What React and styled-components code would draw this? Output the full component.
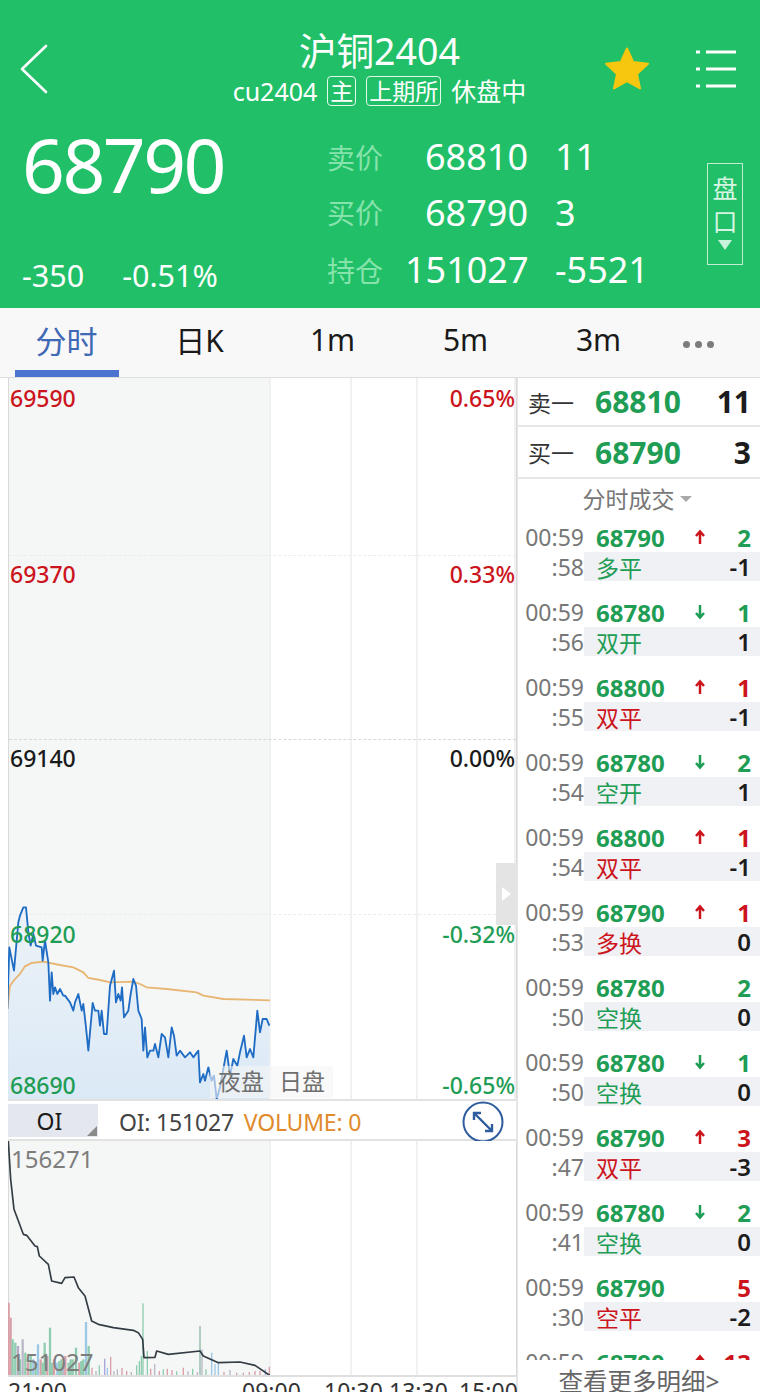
import React from "react";
import styled, { createGlobalStyle } from "styled-components";

const GREEN = "#21bf67";
const UP = "#cc141c";
const DOWN = "#1f9d55";

const GlobalStyle = createGlobalStyle`
  html, body {
    margin: 0;
    padding: 0;
    background: #fff;
    font-family: "Noto Sans", "Noto Sans CJK SC", sans-serif;
  }
  * { box-sizing: border-box; }
`;

const Page = styled.div`
  width: 760px;
  height: 1392px;
  overflow: hidden;
  display: flex;
  flex-direction: column;
`;

// top green block
const Header = styled.header`
  height: 308px;
  flex: none;
  background: ${GREEN};
  color: #fff;
  padding: 29px 23px 0 20px;
`;

const NavRow = styled.div`
  display: grid;
  grid-template-columns: 1fr auto 1fr;
  align-items: center;
`;

const NavRight = styled.div`
  display: flex;
  justify-content: flex-end;
  align-items: center;
  gap: 45px;
`;

const TitleBlock = styled.div`
  text-align: center;
  margin-left: 2px;
`;

const Title = styled.div`
  font-size: 37.5px;
  line-height: 44px;
`;

const SubTitle = styled.div`
  font-size: 25px;
  line-height: 34px;
  display: flex;
  justify-content: center;
  align-items: center;
  gap: 10px;
  margin-top: 1px;
  white-space: nowrap;
`;

const Tag = styled.span`
  border: 1.5px solid #e4f8ec;
  border-radius: 4px;
  font-size: 23px;
  line-height: 28px;
  padding: 0 2px;
`;

const QuoteRow = styled.div`
  display: flex;
  margin-top: 14px;
`;

const PriceCol = styled.div`
  width: 305px;
  flex: none;
  padding-left: 2px;
`;

const BigPrice = styled.div`
  font-size: 75px;
  line-height: 90px;
  letter-spacing: -2.5px;
  margin-top: -3px;
`;

const ChangeRow = styled.div`
  display: flex;
  gap: 38px;
  font-size: 30.5px;
  line-height: 40px;
  margin-top: 46px;
`;

const QuoteGrid = styled.div`
  display: grid;
  grid-template-columns: 78px 123px auto;
  grid-template-rows: 55px 56px 59px;
  align-items: center;
  margin-top: 7px;
  margin-left: 2px;
  height: 170px;
`;

const QuoteLabel = styled.span`
  color: #86e3ab;
  font-size: 28px;
`;

const QuoteValue = styled.span`
  font-size: 36px;
  text-align: right;
  white-space: nowrap;
`;

const QuoteExtra = styled.span`
  font-size: 36px;
  padding-left: 27px;
  white-space: nowrap;
`;

const DepthButton = styled.div`
  width: 36px;
  height: 102px;
  margin-left: auto;
  margin-right: -6px;
  margin-top: 41px;
  border: 1.5px solid #bfeed2;
  display: flex;
  flex-direction: column;
  align-items: center;
  font-size: 25px;
  line-height: 33px;
  padding-top: 8px;
  color: #d5f5e2;
`;

const DepthArrow = styled.i`
  width: 0;
  height: 0;
  margin-top: 2px;
  border-left: 7px solid transparent;
  border-right: 7px solid transparent;
  border-top: 10px solid #c8f2da;
`;

const Tabs = styled.nav`
  height: 70px;
  flex: none;
  display: flex;
  background: #f8f8f8;
  border-bottom: 1px solid #dedede;
`;

const Tab = styled.div`
  width: ${(p) => (p.$narrow ? "66px" : "133px")};
  display: flex;
  justify-content: center;
  align-items: center;
  padding-bottom: 7px;
  position: relative;
  font-size: ${(p) => (p.$active ? "31px" : "30px")};
  color: ${(p) => (p.$active ? "#3f68b5" : "#1a1a1a")};
  &::after {
    content: "";
    display: ${(p) => (p.$active ? "block" : "none")};
    position: absolute;
    left: 15px;
    right: 14px;
    bottom: 0;
    height: 7px;
    background: #4a74cf;
  }
`;

const MoreDots = styled.div`
  display: flex;
  gap: 5px;
  margin-top: 10px;
  i {
    width: 7px;
    height: 7px;
    border-radius: 50%;
    background: #7c7c7c;
  }
`;

const Body = styled.div`
  flex: 1;
  display: flex;
  min-height: 0;
`;

const ChartColumn = styled.section`
  width: 517px;
  flex: none;
  padding-left: 8px;
  display: flex;
  flex-direction: column;
`;

// night session shading + the vertical grid lines
const Plot = styled.div`
  position: relative;
  height: ${(p) => p.$height}px;
  flex: none;
  display: grid;
  grid-template-columns: 262px 81px 66px 1fr;
  border-left: 1px solid #d9d9d9;
  border-right: 1px solid #d9d9d9;
`;

const Cell = styled.div`
  background: ${(p) => (p.$shade ? "#f5f7f7" : "#fff")};
  border-right: 2px solid #f1f1f1;
  &:last-of-type { border-right: 0; }
`;

const DashLine = styled.div`
  position: absolute;
  left: 0;
  right: 0;
  top: ${(p) => p.$top}px;
  border-top: 1px dashed ${(p) => p.$color || "#ececec"};
`;

const AxisLabel = styled.span`
  position: absolute;
  top: ${(p) => p.$top}px;
  ${(p) => (p.$right ? "right: 1px;" : "left: 1px;")}
  font-size: 23px;
  line-height: 28px;
  font-weight: 500;
  color: ${(p) => p.$color};
`;

const GrayLabel = styled.span`
  position: absolute;
  left: 2px;
  top: ${(p) => p.$top}px;
  font-size: 24px;
  line-height: 30px;
  color: #7d7d7d;
`;

const ChartSvg = styled.svg`
  position: absolute;
  left: -1px;
  bottom: 0;
  display: block;
`;

const SessionSwitch = styled.div`
  position: absolute;
  left: 201px;
  top: 688px;
  height: 32px;
  display: flex;
  gap: 15px;
  padding: 0 8px;
  background: rgba(245, 245, 245, 0.6);
  font-size: 23px;
  line-height: 30px;
  color: #6f6f6f;
`;

const Handle = styled.div`
  position: absolute;
  right: -1px;
  top: 485px;
  width: 21px;
  height: 62px;
  background: #e4e4e4;
  display: flex;
  align-items: center;
  justify-content: center;
  &::after {
    content: "";
    border-top: 7px solid transparent;
    border-bottom: 7px solid transparent;
    border-left: 9px solid #fff;
  }
`;

const IndicatorBar = styled.div`
  height: 42px;
  flex: none;
  display: flex;
  align-items: center;
  border-top: 2px solid #e2e2e2;
  border-bottom: 2px solid #e2e2e2;
  border-right: 1px solid #d9d9d9;
  font-size: 23px;
  color: #444;
  background: #fff;
`;

const IndicatorSelect = styled.div`
  width: 90px;
  height: 33px;
  margin-top: 1px;
  background: #e5e7ef;
  color: #1a1a1a;
  text-align: center;
  line-height: 35px;
  position: relative;
  padding-right: 7px;
  &::after {
    content: "";
    position: absolute;
    right: 1px;
    bottom: 1px;
    border-left: 10px solid transparent;
    border-bottom: 10px solid #8b8b8b;
  }
`;

const IndicatorText = styled.div`
  margin-left: 21px;
  margin-top: 3px;
  display: flex;
  gap: 10px;
  letter-spacing: -0.2px;
  white-space: nowrap;
`;

const VolumeText = styled.span`
  color: #e08a2c;
`;

const ExpandIcon = styled.svg`
  margin-left: auto;
  margin-right: 12px;
  margin-top: 3px;
  flex: none;
`;

const TimeAxis = styled.div`
  position: relative;
  height: 20px;
  border-top: 2px solid #dfdfdf;
  font-size: 23px;
  line-height: 28px;
  color: #333;
`;

const TimeLabel = styled.span`
  position: absolute;
  top: 0;
  left: ${(p) => p.$left}px;
`;

// right side: order book and tick list
const SidePanel = styled.aside`
  flex: 1;
  display: flex;
  flex-direction: column;
  margin-left: -1px;
  border-left: 2px solid #e6e6e6;
  min-width: 0;
`;

const BookRow = styled.div`
  height: ${(p) => p.$height}px;
  flex: none;
  display: flex;
  align-items: center;
  padding: 0 9px 0 10px;
  border-bottom: 2px solid #e6e6e6;
`;

const BookLabel = styled.span`
  width: 67px;
  font-size: 23px;
  color: #333;
`;

const BookPrice = styled.span`
  font-size: 30px;
  font-weight: 700;
  color: ${DOWN};
`;

const BookQty = styled.span`
  margin-left: auto;
  font-size: 30px;
  font-weight: 700;
  color: #1c1c1c;
`;

const ListHeading = styled.div`
  height: 43px;
  flex: none;
  display: flex;
  justify-content: center;
  align-items: center;
  gap: 5px;
  font-size: 23px;
  color: #777;
  padding: 0 4px 5px 0;
`;

const Caret = styled.i`
  width: 0;
  height: 0;
  border-left: 6px solid transparent;
  border-right: 6px solid transparent;
  border-top: 6px solid #a9a9a9;
  margin-top: 1px;
`;

const TickList = styled.div`
  flex: 1;
  min-height: 0;
  overflow: hidden;
`;

const TickItem = styled.div`
  height: 75px;
  padding-bottom: 16px;
`;

const TickLine = styled.div`
  height: ${(p) => (p.$band ? 29 : 30)}px;
  display: flex;
  align-items: center;
`;

const TickTime = styled.span`
  width: 66px;
  flex: none;
  text-align: right;
  font-size: 23px;
  color: #777;
`;

const TickRest = styled.div`
  flex: 1;
  height: 100%;
  display: flex;
  align-items: center;
  padding: 0 9px 0 12px;
  background: ${(p) => (p.$band ? "#f0f1f5" : "transparent")};
`;

const TickPrice = styled.span`
  width: 98px;
  flex: none;
  font-size: 24px;
  font-weight: 700;
  color: ${DOWN};
`;

const TickArrow = styled.svg`
  flex: none;
`;

const TickVol = styled.span`
  margin-left: auto;
  font-size: 24px;
  font-weight: 700;
  color: ${(p) => p.$color};
`;

const TickKind = styled.span`
  font-size: 23px;
  color: ${(p) => p.$color};
`;

const TickDelta = styled.span`
  margin-left: auto;
  font-size: 24px;
  font-weight: 600;
  color: #1c1c1c;
`;

const MoreLink = styled.div`
  height: 32px;
  flex: none;
  background: #fff;
  text-align: center;
  font-size: 24.5px;
  line-height: 44px;
  color: #666;
`;

const ticks = [
  { sec: ":58", price: 68790, dir: "up", vol: 2, color: DOWN, kind: "多平", kindColor: DOWN, delta: "-1" },
  { sec: ":56", price: 68780, dir: "down", vol: 1, color: DOWN, kind: "双开", kindColor: DOWN, delta: "1" },
  { sec: ":55", price: 68800, dir: "up", vol: 1, color: UP, kind: "双平", kindColor: UP, delta: "-1" },
  { sec: ":54", price: 68780, dir: "down", vol: 2, color: DOWN, kind: "空开", kindColor: DOWN, delta: "1" },
  { sec: ":54", price: 68800, dir: "up", vol: 1, color: UP, kind: "双平", kindColor: UP, delta: "-1" },
  { sec: ":53", price: 68790, dir: "up", vol: 1, color: UP, kind: "多换", kindColor: UP, delta: "0" },
  { sec: ":50", price: 68780, vol: 2, color: DOWN, kind: "空换", kindColor: DOWN, delta: "0" },
  { sec: ":50", price: 68780, dir: "down", vol: 1, color: DOWN, kind: "空换", kindColor: DOWN, delta: "0" },
  { sec: ":47", price: 68790, dir: "up", vol: 3, color: UP, kind: "双平", kindColor: UP, delta: "-3" },
  { sec: ":41", price: 68780, dir: "down", vol: 2, color: DOWN, kind: "空换", kindColor: DOWN, delta: "0" },
  { sec: ":30", price: 68790, vol: 5, color: UP, kind: "空平", kindColor: UP, delta: "-2" },
  { sec: ":28", price: 68790, dir: "up", vol: 13, color: UP, kind: "多平", kindColor: UP, delta: "-1" },
];

// traced in 3x crop coordinates
const pricePts =
  "22,390 28,205 42,275 55,130 60,110 70,85 78,85 85,160 92,200 100,165 108,200 125,205 128,245 135,185 145,250 150,365 155,280 160,345 165,325 172,345 180,330 190,350 195,350 210,370 220,395 225,370 235,345 245,395 250,375 258,445 265,515 278,372 285,395 295,395 300,440 305,395 312,465 320,465 330,320 342,275 348,370 355,345 362,365 366,325 372,415 385,395 392,345 400,300 408,320 415,395 425,420 430,515 435,445 442,535 450,515 460,515 465,495 475,535 485,465 495,475 505,535 515,445 522,470 530,530 540,515 555,535 570,520 580,535 595,515 600,610 610,585 615,605 625,565 635,605 642,590 650,660 660,625 680,515 690,590 700,540 712,560 720,520 732,470 740,535 750,510 760,535 772,395 780,460 788,420 800,420 808,440";
const avgPts =
  "22,390 30,320 45,300 60,285 75,262 95,252 130,248 180,258 220,265 250,280 265,297 300,303 330,310 400,308 420,315 440,325 500,330 590,340 610,350 670,360 810,364";
const oiPts =
  "25,35 32,150 42,240 70,315 80,318 105,350 112,352 118,380 145,405 155,455 185,462 195,445 222,443 235,475 255,500 275,575 295,585 340,595 400,603 415,610 428,630 432,685 465,684 470,665 505,675 600,665 610,680 655,700 720,698 765,708 812,740";

const volBars = [
  [26, 520, "#d9a0a8"], [32, 565, "#d9a0a8"], [38, 630, "#8fcdb0"], [46, 640, "#8fcdb0"], [54, 650, "#b9a9c9"],
  [60, 690, "#8fcdb0"], [68, 630, "#b8b8c8"], [76, 670, "#8fcdb0"], [84, 700, "#d9a0a8"], [92, 680, "#8fcdb0"],
  [100, 690, "#9cc8e6"], [107, 700, "#8fcdb0"], [114, 645, "#9cc8e6"], [122, 690, "#d9a0a8"], [128, 700, "#8fcdb0"],
  [134, 640, "#8fcdb0"], [142, 680, "#d9a0a8"], [150, 595, "#8fcdb0"], [156, 700, "#8fcdb0"], [162, 690, "#d9a0a8"],
  [172, 700, "#9cc8e6"], [178, 695, "#8fcdb0"], [184, 690, "#8fcdb0"], [190, 700, "#b8b8c8"], [196, 680, "#d9a0a8"],
  [206, 700, "#8fcdb0"], [212, 690, "#8fcdb0"], [218, 690, "#8fcdb0"], [228, 655, "#8fcdb0"], [238, 700, "#d9a0a8"],
  [244, 695, "#8fcdb0"], [250, 690, "#8fcdb0"], [258, 578, "#9cc8e6"], [266, 650, "#8fcdb0"], [276, 715, "#d9a0a8"],
  [288, 725, "#b8b8c8"], [298, 708, "#8fcdb0"], [314, 688, "#a6a6dc"], [322, 715, "#9cc8e6"], [332, 682, "#d9a0a8"],
  [342, 725, "#b8b8c8"], [352, 720, "#b8b8c8"], [366, 716, "#d9a0a8"], [380, 725, "#d9a0a8"], [394, 728, "#b8b8c8"],
  [410, 708, "#8fcdb0"], [418, 695, "#8fcdb0"], [424, 680, "#8fcdb0"], [429, 522, "#8fcdb0"], [442, 665, "#8fcdb0"],
  [452, 718, "#d9a0a8"], [464, 705, "#b8b8c8"], [478, 725, "#d9a0a8"], [490, 720, "#8fcdb0"], [502, 718, "#d9a0a8"],
  [516, 722, "#d9a0a8"], [530, 726, "#8fcdb0"], [550, 715, "#d9a0a8"], [564, 726, "#b8b8c8"], [578, 718, "#8fcdb0"],
  [592, 728, "#b8b8c8"], [600, 590, "#8fb8a8"], [606, 660, "#b8b8c8"], [618, 720, "#8fcdb0"], [635, 670, "#9cc8e6"],
  [645, 705, "#9cc8e6"], [655, 700, "#9cc8e6"], [672, 728, "#d9a0a8"], [690, 722, "#b8b8c8"], [710, 730, "#d9a0a8"],
  [730, 730, "#d9a0a8"], [748, 728, "#d9a0a8"], [765, 725, "#d9a0a8"], [780, 725, "#d9a0a8"], [796, 720, "#a6a6dc"],
  [808, 712, "#d9a0a8"],
];

function Chevron() {
  return (
    <svg width="28" height="50" viewBox="0 0 28 50" fill="none">
      <path d="M26 2 L2 25 L26 48" stroke="#fff" strokeWidth="2.6" strokeLinecap="round" strokeLinejoin="round" />
    </svg>
  );
}

function Star() {
  return (
    <svg width="46" height="43" viewBox="0 0 46 43">
      <path
        d="M23 1.5 L29.2 15 L44 16.8 L33 27 L36 41.5 L23 34.2 L10 41.5 L13 27 L2 16.8 L16.8 15 Z"
        fill="#f7c60f"
        stroke="#f7c60f"
        strokeWidth="2"
        strokeLinejoin="round"
      />
    </svg>
  );
}

function MenuIcon() {
  return (
    <svg width="42" height="40" viewBox="0 0 42 40" stroke="#fff" strokeWidth="3">
      <path d="M1 3 H5 M1 20 H5 M1 37 H5" />
      <path d="M11 3 H41 M11 20 H41 M11 37 H41" />
    </svg>
  );
}

function ExpandGlyph() {
  return (
    <ExpandIcon width="42" height="42" viewBox="0 0 42 42" fill="none" stroke="#2f5c9e" strokeWidth="2">
      <circle cx="21" cy="21" r="19.5" />
      <path d="M12 12 L30 30 M12 19 V12 H19 M30 23 V30 H23" strokeWidth="2.4" />
    </ExpandIcon>
  );
}

function Arrow({ dir }) {
  const up = dir === "up";
  return (
    <TickArrow width="12" height="16" viewBox="0 0 12 16" fill="none" stroke={up ? UP : DOWN} strokeWidth="2.5">
      {up ? <path d="M6 15 V3 M2 7 L6 2.5 L10 7" /> : <path d="M6 1 V13 M2 9 L6 13.5 L10 9" />}
    </TickArrow>
  );
}

function GridCells() {
  return (
    <>
      <Cell $shade />
      <Cell />
      <Cell />
      <Cell />
    </>
  );
}

export default function App() {
  return (
    <Page>
      <GlobalStyle />
      <Header>
        <NavRow>
          <Chevron />
          <TitleBlock>
            <Title>沪铜2404</Title>
            <SubTitle>
              <span>cu2404</span>
              <Tag>主</Tag>
              <Tag>上期所</Tag>
              <span>休盘中</span>
            </SubTitle>
          </TitleBlock>
          <NavRight>
            <Star />
            <MenuIcon />
          </NavRight>
        </NavRow>
        <QuoteRow>
          <PriceCol>
            <BigPrice>68790</BigPrice>
            <ChangeRow>
              <span>-350</span>
              <span>-0.51%</span>
            </ChangeRow>
          </PriceCol>
          <QuoteGrid>
            <QuoteLabel>卖价</QuoteLabel>
            <QuoteValue>68810</QuoteValue>
            <QuoteExtra>11</QuoteExtra>
            <QuoteLabel>买价</QuoteLabel>
            <QuoteValue>68790</QuoteValue>
            <QuoteExtra>3</QuoteExtra>
            <QuoteLabel>持仓</QuoteLabel>
            <QuoteValue>151027</QuoteValue>
            <QuoteExtra>-5521</QuoteExtra>
          </QuoteGrid>
          <DepthButton>
            <span>盘</span>
            <span>口</span>
            <DepthArrow />
          </DepthButton>
        </QuoteRow>
      </Header>

      <Tabs>
        <Tab $active>分时</Tab>
        <Tab>日K</Tab>
        <Tab>1m</Tab>
        <Tab>5m</Tab>
        <Tab>3m</Tab>
        <Tab $narrow>
          <MoreDots>
            <i />
            <i />
            <i />
          </MoreDots>
        </Tab>
      </Tabs>

      <Body>
        <ChartColumn>
          <Plot $height={721}>
            <GridCells />
            <DashLine $top={177} />
            <DashLine $top={361} $color="#d8d8d8" />
            <DashLine $top={536} />
            <ChartSvg width="262" height="220" viewBox="24 0 786 660" fill="none">
              <defs>
                <linearGradient id="priceFill" x1="0" y1="0" x2="0" y2="1">
                  <stop offset="0" stopColor="#dbe9f6" stopOpacity="0.35" />
                  <stop offset="1" stopColor="#dbe9f6" />
                </linearGradient>
              </defs>
              <polygon points={`${pricePts} 808,660 22,660`} fill="url(#priceFill)" />
              <polyline points={avgPts} stroke="#e8b672" strokeWidth="5.5" />
              <polyline points={pricePts} stroke="#1f6cc4" strokeWidth="5.5" strokeLinejoin="round" />
            </ChartSvg>
            <AxisLabel $top={6} $color={UP}>69590</AxisLabel>
            <AxisLabel $top={6} $right $color={UP}>0.65%</AxisLabel>
            <AxisLabel $top={182} $color={UP}>69370</AxisLabel>
            <AxisLabel $top={182} $right $color={UP}>0.33%</AxisLabel>
            <AxisLabel $top={366} $color="#1a1a1a">69140</AxisLabel>
            <AxisLabel $top={366} $right $color="#1a1a1a">0.00%</AxisLabel>
            <AxisLabel $top={542} $color={DOWN}>68920</AxisLabel>
            <AxisLabel $top={542} $right $color={DOWN}>-0.32%</AxisLabel>
            <AxisLabel $top={693} $color={DOWN}>68690</AxisLabel>
            <AxisLabel $top={693} $right $color={DOWN}>-0.65%</AxisLabel>
            <SessionSwitch>
              <span>夜盘</span>
              <span>日盘</span>
            </SessionSwitch>
            <Handle />
          </Plot>

          <IndicatorBar>
            <IndicatorSelect>OI</IndicatorSelect>
            <IndicatorText>
              <span>OI: 151027</span>
              <VolumeText>VOLUME: 0</VolumeText>
            </IndicatorText>
            <ExpandGlyph />
          </IndicatorBar>

          <Plot $height={234}>
            <GridCells />
            <ChartSvg width="262" height="234" viewBox="24 35 786 702" fill="none">
              {volBars.map(([x, y, c]) => (
                <line key={x} x1={x} x2={x} y1={y} y2={740} stroke={c} strokeWidth={x < 275 ? 7 : 4} />
              ))}
              <polyline points={oiPts} stroke="#333c44" strokeWidth="5" strokeLinejoin="round" />
            </ChartSvg>
            <GrayLabel $top={3}>156271</GrayLabel>
            <GrayLabel $top={206}>151027</GrayLabel>
          </Plot>

          <TimeAxis>
            <TimeLabel $left={0}>21:00</TimeLabel>
            <TimeLabel $left={234}>09:00</TimeLabel>
            <TimeLabel $left={316}>10:30</TimeLabel>
            <TimeLabel $left={381}>13:30</TimeLabel>
            <TimeLabel $left={451}>15:00</TimeLabel>
          </TimeAxis>
        </ChartColumn>

        <SidePanel>
          <BookRow $height={49}>
            <BookLabel>卖一</BookLabel>
            <BookPrice>68810</BookPrice>
            <BookQty>11</BookQty>
          </BookRow>
          <BookRow $height={52}>
            <BookLabel>买一</BookLabel>
            <BookPrice>68790</BookPrice>
            <BookQty>3</BookQty>
          </BookRow>
          <ListHeading>
            分时成交
            <Caret />
          </ListHeading>
          <TickList>
            {ticks.map((t, i) => (
              <TickItem key={i}>
                <TickLine>
                  <TickTime>00:59</TickTime>
                  <TickRest>
                    <TickPrice>{t.price}</TickPrice>
                    {t.dir && <Arrow dir={t.dir} />}
                    <TickVol $color={t.color}>{t.vol}</TickVol>
                  </TickRest>
                </TickLine>
                <TickLine $band>
                  <TickTime>{t.sec}</TickTime>
                  <TickRest $band>
                    <TickKind $color={t.kindColor}>{t.kind}</TickKind>
                    <TickDelta>{t.delta}</TickDelta>
                  </TickRest>
                </TickLine>
              </TickItem>
            ))}
          </TickList>
          <MoreLink>查看更多明细&gt;</MoreLink>
        </SidePanel>
      </Body>
    </Page>
  );
}
